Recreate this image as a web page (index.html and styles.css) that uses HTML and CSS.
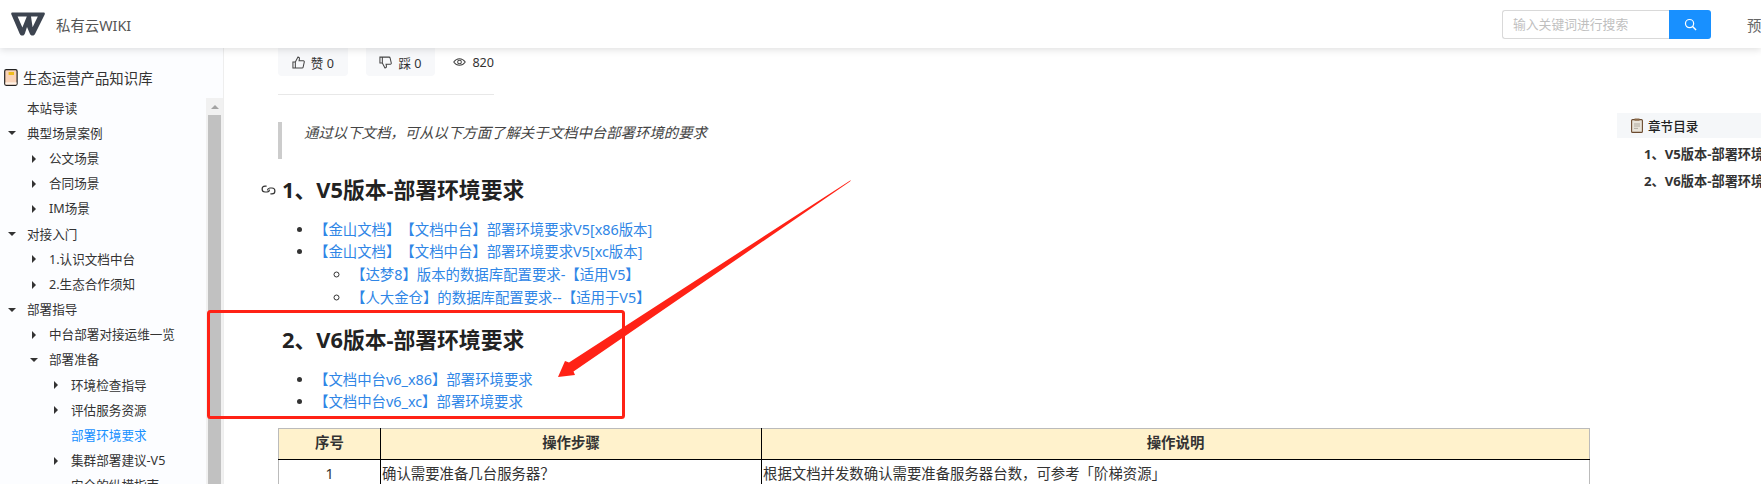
FILE: index.html
```html
<!DOCTYPE html>
<html lang="zh-CN">
<head>
<meta charset="utf-8">
<title>私有云WIKI</title>
<link rel="stylesheet" href="styles.css">
</head>
<body>
<header class="topbar">
  <svg class="logo" viewBox="0 0 34 24" aria-hidden="true"><path fill="#3d4450" fill-rule="evenodd" d="M1.5 .5H32.5C33.6 .5 34.2 1.4 33.7 2.4L24 22C23.3 23.3 22.6 23.6 21.6 23.6C20.4 23.6 19.6 23.2 19 22L16 15L13.8 21.8C13.2 23.2 12.4 23.6 11.4 23.6C10.2 23.6 9.4 23.2 8.8 22L.4 2.6C-.1 1.4 .4 .5 1.5 .5ZM6.6 4.6L11.4 15.6L15.8 4.6ZM20 4.6L21.6 15.2L26.8 4.6Z"/></svg>
  <span class="brand">私有云WIKI</span>
  <div class="search">
    <span class="search-input">输入关键词进行搜索</span>
    <span class="search-btn"><svg viewBox="0 0 14 14" width="13" height="13" aria-hidden="true"><circle cx="6" cy="6" r="4.4" fill="none" stroke="#fff" stroke-width="1.3"/><path d="M9.2 9.2L13 13" stroke="#fff" stroke-width="1.5"/></svg></span>
  </div>
  <span class="preview">预览</span>
</header>
<div class="main">
  <aside class="sidebar">
    <div class="kb-title">
      <svg class="book" viewBox="0 0 14 17" aria-hidden="true"><rect x=".7" y=".7" width="12.4" height="15.6" rx="1.5" fill="#f9d3b8" stroke="#222" stroke-width="1.2"/><rect x="4.6" y="3" width="5.4" height="3" fill="#eebc1c"/><rect x="1.5" y="13.4" width="11" height="2" fill="#fff3e8"/></svg>
      <span>生态运营产品知识库</span>
    </div>
    <div class="tree-wrap">
      <nav class="tree">
        <div class="row l1">本站导读</div>
        <div class="row l1"><i class="caret down"></i>典型场景案例</div>
        <div class="row l2"><i class="caret right"></i>公文场景</div>
        <div class="row l2"><i class="caret right"></i>合同场景</div>
        <div class="row l2"><i class="caret right"></i>IM场景</div>
        <div class="row l1"><i class="caret down"></i>对接入门</div>
        <div class="row l2"><i class="caret right"></i>1.认识文档中台</div>
        <div class="row l2"><i class="caret right"></i>2.生态合作须知</div>
        <div class="row l1"><i class="caret down"></i>部署指导</div>
        <div class="row l2"><i class="caret right"></i>中台部署对接运维一览</div>
        <div class="row l2"><i class="caret down"></i>部署准备</div>
        <div class="row l3"><i class="caret right"></i>环境检查指导</div>
        <div class="row l3"><i class="caret right"></i>评估服务资源</div>
        <div class="row l3 active">部署环境要求</div>
        <div class="row l3"><i class="caret right"></i>集群部署建议-V5</div>
        <div class="row l3">安全的纵横指南</div>
      </nav>
      <div class="scrollbar"><i class="scroll-up"></i><div class="scroll-thumb"></div></div>
    </div>
  </aside>
  <main class="article">
    <div class="actions">
      <span class="action">
        <svg viewBox="0 0 14 14" width="13" height="13" aria-hidden="true"><path d="M1 6.5H3.6V13H1ZM3.6 6.5L6.4 1.2C7.6 1.2 8.2 2 8 3.2L7.6 5.2H12.2C13 5.2 13.4 5.9 13.2 6.6L12 12C11.9 12.6 11.4 13 10.8 13H3.6" fill="none" stroke="#444" stroke-width="1.1"/></svg>
        赞 0</span>
      <span class="action">
        <svg viewBox="0 0 14 14" width="13" height="13" aria-hidden="true"><path d="M1 1.2H3.6V7.6H1ZM3.6 7.6L6.4 12.8C7.6 12.8 8.2 12 8 10.8L7.6 8.8H12.2C13 8.8 13.4 8.1 13.2 7.4L12 2.2C11.9 1.6 11.4 1.2 10.8 1.2H3.6" fill="none" stroke="#444" stroke-width="1.1"/></svg>
        踩 0</span>
      <span class="views">
        <svg viewBox="0 0 14 10" width="13" height="10" aria-hidden="true"><path d="M.8 5C4 .2 10 .2 13.2 5C10 9.8 4 9.8 .8 5Z" fill="none" stroke="#444" stroke-width="1.1"/><circle cx="7" cy="5" r="2" fill="none" stroke="#444" stroke-width="1.1"/></svg>
        820</span>
    </div>
    <blockquote class="note">通过以下文档，可从以下方面了解关于文档中台部署环境的要求</blockquote>
    <h2 class="heading">
      <svg class="anchor" viewBox="0 0 15 12" aria-hidden="true"><path d="M5.6 2.2H4A2.9 2.9 0 0 0 4 8H6.2A2.8 2.8 0 0 0 8.6 5.6M9.4 9.8H11A2.9 2.9 0 0 0 11 4H8.8A2.8 2.8 0 0 0 6.4 6.4" fill="none" stroke="#333" stroke-width="1.2"/></svg>
      1、V5版本-部署环境要求</h2>
    <ul class="links">
      <li><a href="#">【金山文档】【文档中台】部署环境要求V5[x86版本]</a></li>
      <li><a href="#">【金山文档】【文档中台】部署环境要求V5[xc版本]</a>
        <ul>
          <li><a href="#">【达梦8】版本的数据库配置要求-【适用V5】</a></li>
          <li><a href="#">【人大金仓】的数据库配置要求--【适用于V5】</a></li>
        </ul>
      </li>
    </ul>
    <h2 class="heading second">2、V6版本-部署环境要求</h2>
    <ul class="links">
      <li><a href="#">【文档中台v6_x86】部署环境要求</a></li>
      <li><a href="#">【文档中台v6_xc】部署环境要求</a></li>
    </ul>
    <table class="steps">
      <colgroup><col class="c1"><col class="c2"><col></colgroup>
      <thead><tr><th>序号</th><th>操作步骤</th><th>操作说明</th></tr></thead>
      <tbody><tr><td class="num">1</td><td>确认需要准备几台服务器？</td><td>根据文档并发数确认需要准备服务器台数，可参考「阶梯资源」</td></tr></tbody>
    </table>
  </main>
  <aside class="toc">
    <div class="toc-title">
      <svg class="clip" viewBox="0 0 12 15" aria-hidden="true"><rect x=".6" y="1.6" width="10.8" height="12.8" rx="1" fill="#e9e4da" stroke="#6b4a2e" stroke-width="1.1"/><rect x="3.5" y=".5" width="5" height="2.2" fill="#8a6a4a"/><path d="M3 6H9M3 8H9M3 10.4H7" stroke="#a9a49a" stroke-width=".9"/></svg>
      章节目录
    </div>
    <div class="toc-item">1、V5版本-部署环境要求</div>
    <div class="toc-item">2、V6版本-部署环境要求</div>
  </aside>
</div>
<svg class="annotations" viewBox="0 0 1761 484" aria-hidden="true">
  <rect x="208.5" y="311.5" width="415" height="106" rx="2" fill="none" stroke="#ff2216" stroke-width="3"/>
  <path d="M851 180 L850 181.5 L573.5 371.5 L575 375 L558 377 L565 361 L569 362.5 Z" fill="#ff2216"/>
</svg>
</body>
</html>
```
FILE: styles.css
```css
* { box-sizing: border-box; }
html, body { margin: 0; height: 100%; overflow: hidden; background: #fff; }
body {
  position: relative;
  display: flex;
  flex-direction: column;
  font-family: "Noto Sans", "Noto Sans CJK SC", sans-serif;
  font-size: 12.6px;
  color: #333;
  text-spacing-trim: space-all;
}
.topbar {
  position: relative;
  z-index: 2;
  flex: none;
  height: 48px;
  display: flex;
  align-items: center;
  padding-left: 11px;
  background: #fff;
  box-shadow: 0 2px 7px rgba(0, 0, 0, .12);
}
.logo { width: 34px; height: 24px; flex: none; }
.brand { margin-left: 11px; font-size: 14.4px; color: #555; }
.search { margin-left: auto; display: flex; height: 29px; }
.search-input {
  width: 167px;
  padding-left: 10px;
  line-height: 27px;
  font-size: 12.8px;
  color: #bfbfbf;
  border: 1px solid #d9d9d9;
  border-right: 0;
  border-radius: 3px 0 0 3px;
}
.search-btn {
  width: 42px;
  display: flex;
  align-items: center;
  justify-content: center;
  background: #1890ff;
  border-radius: 0 3px 3px 0;
}
.preview { width: 50px; padding-left: 36px; font-size: 14.4px; color: #666; white-space: nowrap; overflow: hidden; }
.main { flex: 1; display: flex; min-height: 0; }
.sidebar {
  flex: none;
  width: 224px;
  display: flex;
  flex-direction: column;
  background: #fcfdff;
  border-right: 1px solid #eeeeee;
}
.kb-title {
  flex: none;
  height: 47.6px;
  padding: 12.4px 0 0 4px;
  display: flex;
  align-items: center;
  gap: 5px;
  font-size: 14.4px;
}
.book { width: 14px; height: 17px; flex: none; }
.tree-wrap { flex: 1; display: flex; min-height: 0; }
.tree { flex: 1; overflow: hidden; }
.row { height: 25.2px; line-height: 25.2px; display: flex; align-items: center; white-space: nowrap; }
.l1 { padding-left: 27px; }
.l2 { padding-left: 49px; }
.l3 { padding-left: 71px; }
.row .caret { height: 0; flex: none; }
.caret.down { border-left: 4px solid transparent; border-right: 4px solid transparent; border-top: 4px solid #333; width: 8px; margin-right: 11px; margin-left: -19px; }
.caret.right { border-top: 4px solid transparent; border-bottom: 4px solid transparent; border-left: 4px solid #333; width: 4px; margin-left: -17px; margin-right: 13px; }
.active { color: #1890ff; }
.scrollbar { flex: none; width: 17px; margin-top: 2.4px; padding: 0 2px; background: #f1f1f1; }
.scroll-up { display: block; width: 0; margin: 7px auto 6px; border-left: 4px solid transparent; border-right: 4px solid transparent; border-bottom: 4px solid #a3a3a3; }
.scroll-thumb { height: 400px; background: #c1c1c1; }
.article { flex: none; width: 1366px; padding-left: 54px; font-size: 14.4px; }
.actions {
  width: 216px;
  display: flex;
  align-items: center;
  padding-bottom: 18px;
  border-bottom: 1px solid #e8e8e8;
  font-size: 12.6px;
}
.action {
  width: 70px;
  height: 28px;
  margin-right: 18px;
  display: flex;
  align-items: center;
  justify-content: center;
  gap: 6px;
  background: #f7f8fa;
  border-radius: 0 0 4px 4px;
}
.views { display: flex; align-items: center; gap: 6px; white-space: nowrap; }
.note {
  margin: 27px 0 0;
  height: 37px;
  padding-left: 22px;
  line-height: 22px;
  font-style: italic;
  color: #444;
  border-left: 4px solid #ccc;
}
.heading {
  position: relative;
  margin: 16px 0 0 4px;
  height: 30px;
  line-height: 30px;
  font-size: 21.8px;
  font-weight: 700;
  color: #222;
}
.heading.second { margin-top: 15.6px; }
.anchor { position: absolute; left: -21px; top: 9px; width: 15px; height: 12px; }
.links { margin: 13.6px 0 0; padding: 0 0 0 36px; line-height: 22.7px; }
.links ul { margin: 0; padding-left: 37px; }
.links a { color: #2f86e6; text-decoration: none; }
.steps {
  width: 1312px;
  margin-top: 13.5px;
  table-layout: fixed;
  border-collapse: collapse;
  border: 1px solid #bbb;
}
.c1 { width: 102px; }
.c2 { width: 381px; }
.steps th, .steps td { border: 1px solid #000; line-height: 22.7px; }
.steps th { height: 31px; padding: 0; background: #fff2cc; font-weight: 700; text-align: center; border-top-color: #bbb; }
.steps td { height: 31px; padding: 0 1px; }
.steps .num { text-align: center; }
.steps th:first-child, .steps td:first-child { border-left-color: #bbb; }
.steps th:last-child, .steps td:last-child { border-right-color: #bbb; }
.toc { flex: 1; min-width: 0; overflow: hidden; padding: 65px 0 0 27px; }
.toc-title {
  height: 25px;
  padding-left: 14px;
  display: flex;
  align-items: center;
  gap: 5px;
  background: #f5f7f9;
  color: #222;
  font-weight: 500;
  white-space: nowrap;
}
.clip { width: 12px; height: 15px; flex: none; }
.toc-item { margin-top: 3px; padding-left: 27px; height: 24px; line-height: 24px; font-size: 13.2px; font-weight: 700; color: #333; white-space: nowrap; }
.toc-title + .toc-item { margin-top: 4px; }
.annotations { position: absolute; left: 0; top: 0; width: 1761px; height: 484px; z-index: 3; pointer-events: none; }
```
